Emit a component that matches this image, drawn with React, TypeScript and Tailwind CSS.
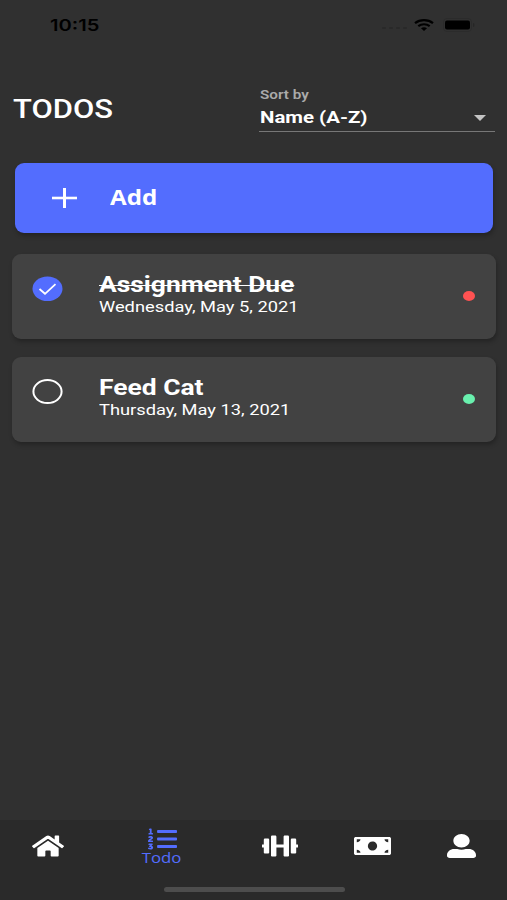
import { FaDumbbell, FaHome, FaListOl, FaMoneyBill, FaUserAlt } from "react-icons/fa";

type Todo = {
  id: number;
  title: string;
  date: string;
  done: boolean;
  titleClass: string;
  dotClass: string;
};

const todos: Todo[] = [
  {
    id: 1,
    title: "Assignment Due",
    date: "Wednesday, May 5, 2021",
    done: true,
    titleClass: "line-through decoration-1",
    dotClass: "bg-[#ff5252]",
  },
  {
    id: 2,
    title: "Feed Cat",
    date: "Thursday, May 13, 2021",
    done: false,
    titleClass: "",
    dotClass: "bg-[#69f0ae]",
  },
];

function StatusBar() {
  return (
    <div className="flex h-[49px] items-center justify-between pl-[50px] pr-[32px] text-black">
      <span className="origin-left scale-x-[1.26] font-[Inter,sans-serif] text-[16px] font-semibold leading-none">
        10:15
      </span>
      <div className="flex items-center">
        <div className="mr-[7px] mt-[7px] flex gap-[3px]">
          <i className="h-[2px] w-[4px] rounded-full bg-[#292929]" />
          <i className="h-[2px] w-[4px] rounded-full bg-[#292929]" />
          <i className="h-[2px] w-[4px] rounded-full bg-[#292929]" />
          <i className="h-[2px] w-[4px] rounded-full bg-[#292929]" />
        </div>
        <svg width="20" height="12" viewBox="0 0 20 12" fill="none" stroke="currentColor" strokeWidth="2.2">
          <path d="M1 4.2C6 .1 14 .1 19 4.2M4.3 7.2c3.2-2.6 8.2-2.6 11.4 0" />
          <path d="M7 9.3c1.7-1.3 4.3-1.3 6 0L10 12z" fill="currentColor" stroke="none" />
        </svg>
        <svg className="ml-[9px]" width="32" height="14" viewBox="0 0 32 14">
          <rect x=".5" y=".5" width="28" height="13" rx="3.5" fill="none" stroke="#2b2b2b" />
          <rect x="2" y="2.5" width="25" height="9" rx="2" fill="#000" />
          <path d="M30 5v4c2-.8 2-3.2 0-4z" fill="#262626" />
        </svg>
      </div>
    </div>
  );
}

function TodoCard({ todo }: { todo: Todo }) {
  return (
    <div className="flex h-[85px] rounded-[9px] bg-[#424242] pl-[20px] pr-[21px] shadow-[1px_3px_4px_rgba(0,0,0,0.25)]">
      <svg className="mt-[22px] shrink-0" width="32" height="26" viewBox="0 0 32 26" fill="none">
        {todo.done ? (
          <>
            <ellipse cx="15.5" cy="12.7" rx="15" ry="12.3" fill="#536dfe" />
            <path d="M7.5 13l5.5 4.8L23.5 8.2" stroke="#fff" strokeWidth="1.8" />
          </>
        ) : (
          <ellipse cx="15.5" cy="12.6" rx="14.1" ry="11.5" stroke="#fff" strokeWidth="2" />
        )}
      </svg>
      <div className="ml-[35px] flex-1 whitespace-nowrap pt-[19px] text-white">
        <div className={`w-max origin-left scale-x-[1.2] text-[22px] font-bold leading-[24px] ${todo.titleClass}`}>
          {todo.title}
        </div>
        <div className="w-max origin-left scale-x-[1.218] text-[15px] leading-[20px]">{todo.date}</div>
      </div>
      <i className={`mt-[37px] h-[10px] w-[12px] rounded-[50%] ${todo.dotClass}`} />
    </div>
  );
}

function BottomNav() {
  return (
    <nav className="mt-auto flex h-[80px] flex-col bg-[#2a2a2a] text-white">
      <div className="flex h-[52px] items-center">
        <div className="flex w-[96px] justify-center">
          <FaHome preserveAspectRatio="none" className="h-[24px] w-[32px]" />
        </div>
        <div className="flex w-[132px] flex-col items-center text-[#536dfe]">
          <FaListOl preserveAspectRatio="none" className="h-[24px] w-[29px]" />
          <span className="scale-x-[1.2] font-['Open_Sans',sans-serif] text-[14px] leading-[14px]">Todo</span>
        </div>
        <div className="flex w-[104px] justify-center">
          <FaDumbbell preserveAspectRatio="none" className="h-[24px] w-[36px]" />
        </div>
        <div className="flex w-[80px] justify-center">
          <FaMoneyBill preserveAspectRatio="none" className="h-[24px] w-[37px]" />
        </div>
        <div className="flex w-[95px] justify-center pl-[3px]">
          <FaUserAlt preserveAspectRatio="none" className="h-[24px] w-[29px]" />
        </div>
      </div>
      <div className="ml-[164px] mt-[15px] h-[5px] w-[181px] rounded-full bg-[#4d4d4d]" />
    </nav>
  );
}

export default function App() {
  return (
    <div className="flex h-[900px] w-[507px] flex-col overflow-hidden bg-[#303030] font-[Roboto,sans-serif]">
      <StatusBar />
      <header className="flex h-[84px] justify-between pl-[13px] pr-[12px]">
        <h1 className="mt-[44px] h-[32px] origin-left scale-x-[1.19] text-[26px] font-[550] leading-[32px] text-white">
          TODOS
        </h1>
        <div className="mt-[36px] h-[47px] w-[236px] border-b border-[#777] pl-px">
          <div className="w-max origin-left scale-x-[1.22] text-[12.5px] font-semibold leading-[19px] text-[#aaa]">
            Sort by
          </div>
          <div className="flex items-center justify-between pr-[9px] text-white">
            <span className="origin-left scale-x-[1.2] text-[17px] font-bold leading-[27px]">Name (A-Z)</span>
            <svg width="12" height="6" viewBox="0 0 12 6" fill="#c4c4c4">
              <path d="M0 0h12L6 6z" />
            </svg>
          </div>
        </div>
      </header>
      <main className="mt-[30px] flex flex-col pl-[12px] pr-[11px]">
        <button className="mx-[3px] flex h-[70px] items-center rounded-[9px] bg-[#536dfe] pl-[37px] text-white shadow-[1px_3px_4px_rgba(0,0,0,0.25)]">
          <svg width="25" height="20" viewBox="0 0 25 20" stroke="currentColor" fill="none">
            <path d="M0 10h25" strokeWidth="2.6" />
            <path d="M12.5 0v20" strokeWidth="3" />
          </svg>
          <span className="mb-[2px] ml-[33px] origin-left scale-x-[1.15] font-['Open_Sans',sans-serif] text-[21px] font-bold leading-[24px]">
            Add
          </span>
        </button>
        <div className="mt-[21px] flex flex-col gap-[18px]">
          {todos.map((t) => (
            <TodoCard key={t.id} todo={t} />
          ))}
        </div>
      </main>
      <BottomNav />
    </div>
  );
}
